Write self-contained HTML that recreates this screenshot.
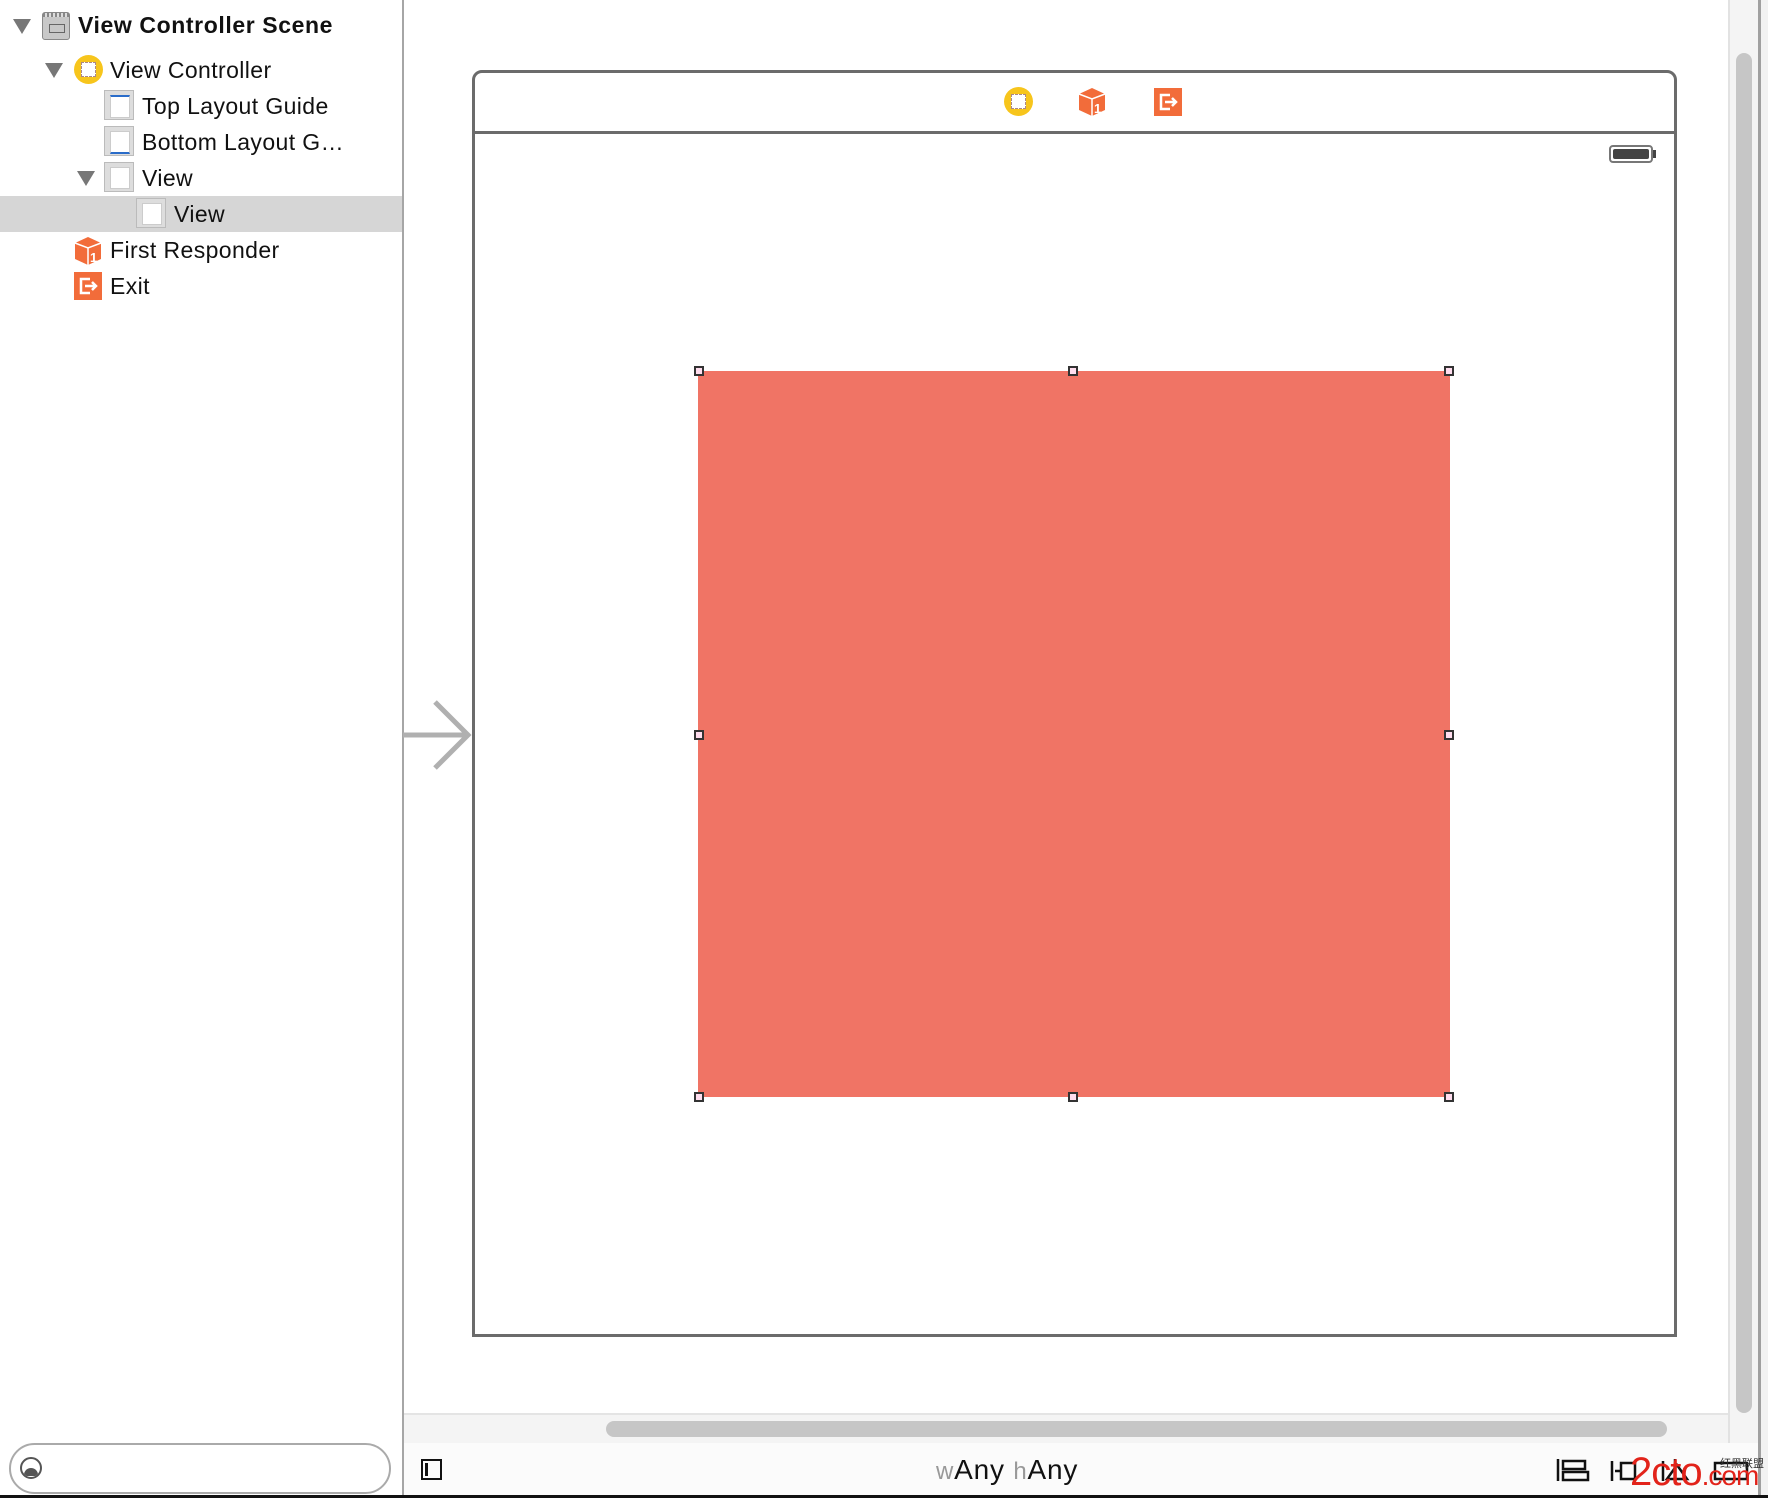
<!DOCTYPE html>
<html><head><meta charset="utf-8"><style>
body{margin:0;width:1768px;height:1498px;position:relative;overflow:hidden;background:#fff;font-family:"Liberation Sans",sans-serif;}
.a{position:absolute}
.row{position:absolute;font-size:23px;color:#111;line-height:36px;height:36px;white-space:nowrap;letter-spacing:0.4px}
.tri{position:absolute;width:0;height:0;border-left:9px solid transparent;border-right:9px solid transparent;border-top:15px solid #777}
.vb{position:absolute;width:30px;height:30px;background:#ddd;border:1px solid #bbb;box-sizing:border-box}
.vb i{position:absolute;left:5px;top:4px;width:18px;height:20px;background:#fff;border:1px solid #ccc}
.h{position:absolute;width:10px;height:10px;border:2px solid #333;background:#fde;box-sizing:border-box}
</style></head><body>
<div class="a" style="left:0;top:196px;width:403px;height:36px;background:#d6d6d6"></div>
<div class="a" style="left:402px;top:0;width:2px;height:1498px;background:#a6a6a6"></div>
<div class="tri" style="left:13px;top:19px"></div>
<div class="a" style="left:42px;top:12px;width:28px;height:28px;background:#c8c8c8;border:1px solid #888;border-radius:3px;box-sizing:border-box"><div class="a" style="left:0;top:0;width:26px;height:4px;background:repeating-linear-gradient(90deg,#888 0 2px,#ddd 2px 4px)"></div><div class="a" style="left:6px;top:11px;width:14px;height:7px;border:1px solid #666"></div></div>
<div class="row" style="left:78px;top:7px;font-weight:bold;letter-spacing:0.6px">View Controller Scene</div>
<div class="tri" style="left:45px;top:63px"></div>
<div class="a" style="left:74px;top:55px;width:29px;height:29px;border-radius:50%;background:#f7c51c"><div class="a" style="left:7px;top:7px;width:13px;height:13px;background:#fff;border:1px dashed #a88"></div></div>
<div class="row" style="left:110px;top:52px">View Controller</div>
<div class="vb" style="left:104px;top:90px"><i style="border-top:2px solid #2a6cc9"></i></div>
<div class="row" style="left:142px;top:88px">Top Layout Guide</div>
<div class="vb" style="left:104px;top:126px"><i style="border-bottom:2px solid #2a6cc9"></i></div>
<div class="row" style="left:142px;top:124px">Bottom Layout G…</div>
<div class="tri" style="left:77px;top:171px"></div>
<div class="vb" style="left:104px;top:162px"><i></i></div>
<div class="row" style="left:142px;top:160px">View</div>
<div class="vb" style="left:136px;top:198px"><i></i></div>
<div class="row" style="left:174px;top:196px">View</div>
<svg class="a" style="left:73px;top:235px" width="30" height="30"><path d="M2 8 L15 2 L28 8 L28 24 L15 30 L2 24Z" fill="#f26c3a"/><path d="M15 13 L15 30 M2 8 L15 13 L28 8" stroke="#fff" stroke-width="1.5" fill="none"/><text x="17" y="27" font-size="13" fill="#fff" font-family="Liberation Sans" font-weight="bold">1</text></svg>
<div class="row" style="left:110px;top:232px">First Responder</div>
<div class="a" style="left:74px;top:272px;width:28px;height:28px;background:#f26c3a"><svg width="28" height="28"><path d="M16 7 H7 V21 H16 M11 14 H22 M18 10 L22 14 L18 18" stroke="#fff" stroke-width="2.5" fill="none"/></svg></div>
<div class="row" style="left:110px;top:268px">Exit</div>
<div class="a" style="left:9px;top:1443px;width:382px;height:51px;border:2px solid #aaa;border-radius:26px;box-sizing:border-box"></div>
<div class="a" style="left:20px;top:1457px;width:22px;height:22px;border:2px solid #555;border-radius:50%;box-sizing:border-box;overflow:hidden"><div class="a" style="left:2px;top:9px;width:14px;height:8px;background:#555;border-radius:7px 7px 0 0"></div></div>
<svg class="a" style="left:403px;top:700px" width="70" height="70"><path d="M0 35 H64 M32 2 L65 35 L32 68" stroke="#b0b0b0" stroke-width="5" fill="none"/></svg>
<div class="a" style="left:472px;top:70px;width:1205px;height:1267px;border:3px solid #6b6b6b;border-radius:10px 10px 0 0;box-sizing:border-box"></div>
<div class="a" style="left:472px;top:131px;width:1205px;height:3px;background:#6b6b6b"></div>
<div class="a" style="left:1004px;top:87px;width:29px;height:29px;border-radius:50%;background:#f7c51c"><div class="a" style="left:7px;top:7px;width:13px;height:13px;background:#fff;border:1px dashed #a88"></div></div>
<svg class="a" style="left:1077px;top:86px" width="30" height="30"><path d="M2 8 L15 2 L28 8 L28 24 L15 30 L2 24Z" fill="#f26c3a"/><path d="M15 13 L15 30 M2 8 L15 13 L28 8" stroke="#fff" stroke-width="1.5" fill="none"/><text x="17" y="27" font-size="13" fill="#fff" font-family="Liberation Sans" font-weight="bold">1</text></svg>
<div class="a" style="left:1154px;top:88px;width:28px;height:28px;background:#f26c3a"><svg width="28" height="28"><path d="M16 7 H7 V21 H16 M11 14 H22 M18 10 L22 14 L18 18" stroke="#fff" stroke-width="2.5" fill="none"/></svg></div>
<div class="a" style="left:1609px;top:145px;width:44px;height:18px;border:2px solid #777;border-radius:4px;box-sizing:border-box;padding:2px"><div style="width:100%;height:100%;background:#444;border-radius:2px"></div></div>
<div class="a" style="left:1653px;top:150px;width:3px;height:8px;background:#444"></div>
<div class="a" style="left:698px;top:371px;width:752px;height:726px;background:#f07465"></div>
<div class="h" style="left:694px;top:366px"></div><div class="h" style="left:1068px;top:366px"></div><div class="h" style="left:1444px;top:366px"></div>
<div class="h" style="left:694px;top:730px"></div><div class="h" style="left:1444px;top:730px"></div>
<div class="h" style="left:694px;top:1092px"></div><div class="h" style="left:1068px;top:1092px"></div><div class="h" style="left:1444px;top:1092px"></div>
<div class="a" style="left:1728px;top:0;width:31px;height:1443px;background:#f4f4f4;border-left:2px solid #e2e2e2"></div>
<div class="a" style="left:1736px;top:53px;width:16px;height:1360px;background:#c6c6c6;border-radius:8px"></div>
<div class="a" style="left:1758px;top:0;width:3px;height:1498px;background:#a0a0a0"></div>
<div class="a" style="left:1761px;top:0;width:7px;height:1498px;background:#f2f2f2"></div>
<div class="a" style="left:404px;top:1413px;width:1324px;height:30px;background:#f4f4f4;border-top:2px solid #e4e4e4;box-sizing:border-box"></div>
<div class="a" style="left:606px;top:1421px;width:1061px;height:16px;background:#c6c6c6;border-radius:8px"></div>
<div class="a" style="left:404px;top:1443px;width:1354px;height:52px;background:#fbfbfb"></div>
<div class="a" style="left:0;top:1495px;width:1768px;height:3px;background:#111"></div>
<div class="a" style="left:421px;top:1459px;width:21px;height:21px;border:2px solid #111;box-sizing:border-box"><div class="a" style="left:2px;top:2px;width:3px;height:13px;background:#111"></div></div>
<div class="a" style="left:936px;top:1455px;font-size:28px;line-height:30px;color:#111;white-space:nowrap;letter-spacing:0.8px"><span style="color:#999;font-size:24px">w</span>Any <span style="color:#999;font-size:24px">h</span>Any</div>
<svg class="a" style="left:1555px;top:1455px" width="200" height="32"><path d="M3 4 V26 M8 6 H30 V14 H8Z M8 17 H33 V25 H8Z" stroke="#111" stroke-width="2.5" fill="none"/><path d="M57 6 V26 M60 16 H66 M66 8 H80 V24 H66Z" stroke="#111" stroke-width="2.5" fill="none"/><path d="M108 6 V26 M112 24 L122 10 L132 24Z M120 4 V26" stroke="#111" stroke-width="2.5" fill="none"/><path d="M160 8 H192 V24 H160Z" stroke="#111" stroke-width="2.5" fill="none"/></svg>
<div class="a" style="left:1630px;top:1450px;font-size:40px;color:#e2231a;letter-spacing:-1px;line-height:44px;white-space:nowrap">2cto<span style="font-size:28px">.com</span></div>
<div class="a" style="left:1720px;top:1455px;font-size:11px;color:#333;font-family:'Noto Sans CJK SC',sans-serif">红黑联盟</div>
</body></html>
